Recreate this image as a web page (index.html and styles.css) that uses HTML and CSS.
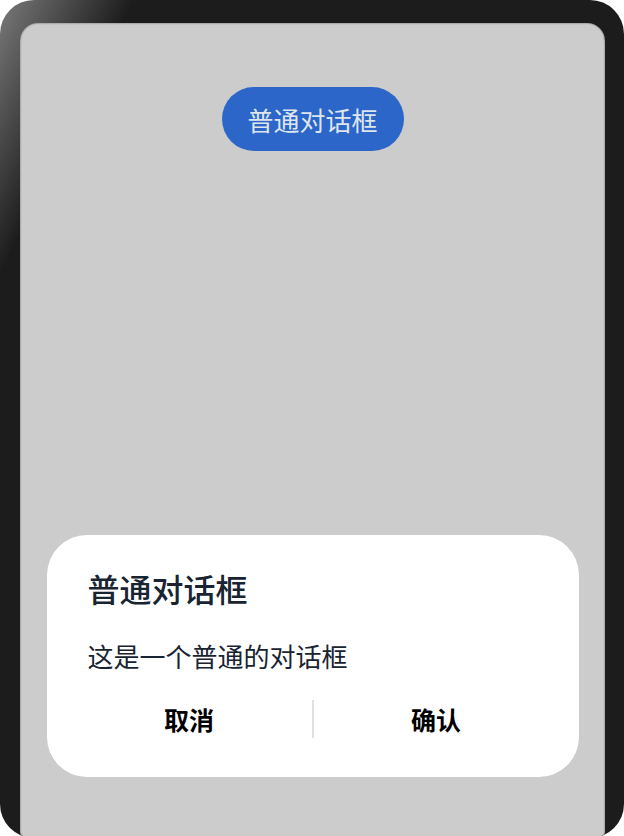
FILE: index.html
```html
<!DOCTYPE html>
<html lang="zh-CN">
<head>
  <meta charset="UTF-8">
  <meta name="viewport" content="width=device-width, initial-scale=1.0">
  <title>普通对话框</title>
  <link rel="stylesheet" href="styles.css">
</head>
<body>
  <div class="device">
    <div class="screen">
      <button class="open-btn">普通对话框</button>

      <div class="dialog">
        <h2 class="dialog-title">普通对话框</h2>
        <p class="dialog-msg">这是一个普通的对话框</p>
        <div class="dialog-actions">
          <button class="action">取消</button>
          <span class="divider"></span>
          <button class="action">确认</button>
        </div>
      </div>
    </div>
  </div>
</body>
</html>
```

FILE: styles.css
```css
body {
  margin: 0;
  background-color: #fff;
  font-family: "Noto Sans CJK SC", "Noto Sans", sans-serif;
}

/* 端末の外枠 */
.device {
  width: 624px;
  height: 838px;
  box-sizing: border-box;
  padding: 23px 19px 0 20px;
  border-radius: 34px;
  background: linear-gradient(116deg, #7a7a7a 0%, #1c1c1c 13%, #1c1c1c 100%);
  overflow: hidden;
}

.screen {
  height: 100%;
  background-color: #cccccc;
  border-radius: 18px 18px 6px 6px;
  box-shadow: inset 0 0 2px rgba(0, 0, 0, 0.6);
  display: flex;
  flex-direction: column;
  align-items: center;
}

.open-btn {
  margin-top: 64px;
  width: 182px;
  height: 64px;
  border: none;
  border-radius: 32px;
  background-color: #2b66c8;
  color: #dfe5ee;
  font-family: inherit;
  font-size: 26px;
  padding: 0;
}

/* ダイアログ */
.dialog {
  margin-top: auto;
  margin-bottom: 61px;
  width: 532px;
  height: 242px;
  box-sizing: border-box;
  background-color: #fff;
  border-radius: 40px;
  padding: 31px 20px 0 20px;
}

.dialog-title {
  margin: 0 0 0 21px;
  font-size: 32px;
  font-weight: 500;
  line-height: 44px;
  color: #182431;
}

.dialog-msg {
  margin: 29px 0 0 21px;
  font-size: 26px;
  line-height: 34px;
  color: #182431;
}

.dialog-actions {
  display: flex;
  align-items: center;
  margin-top: 26px;
  height: 40px;
}

.action {
  flex: 1;
  border: none;
  background: none;
  padding: 0;
  font-family: inherit;
  font-size: 25px;
  font-weight: 700;
  color: #000;
}

.divider {
  width: 2px;
  height: 38px;
  background-color: #e0e0e0;
}
```
